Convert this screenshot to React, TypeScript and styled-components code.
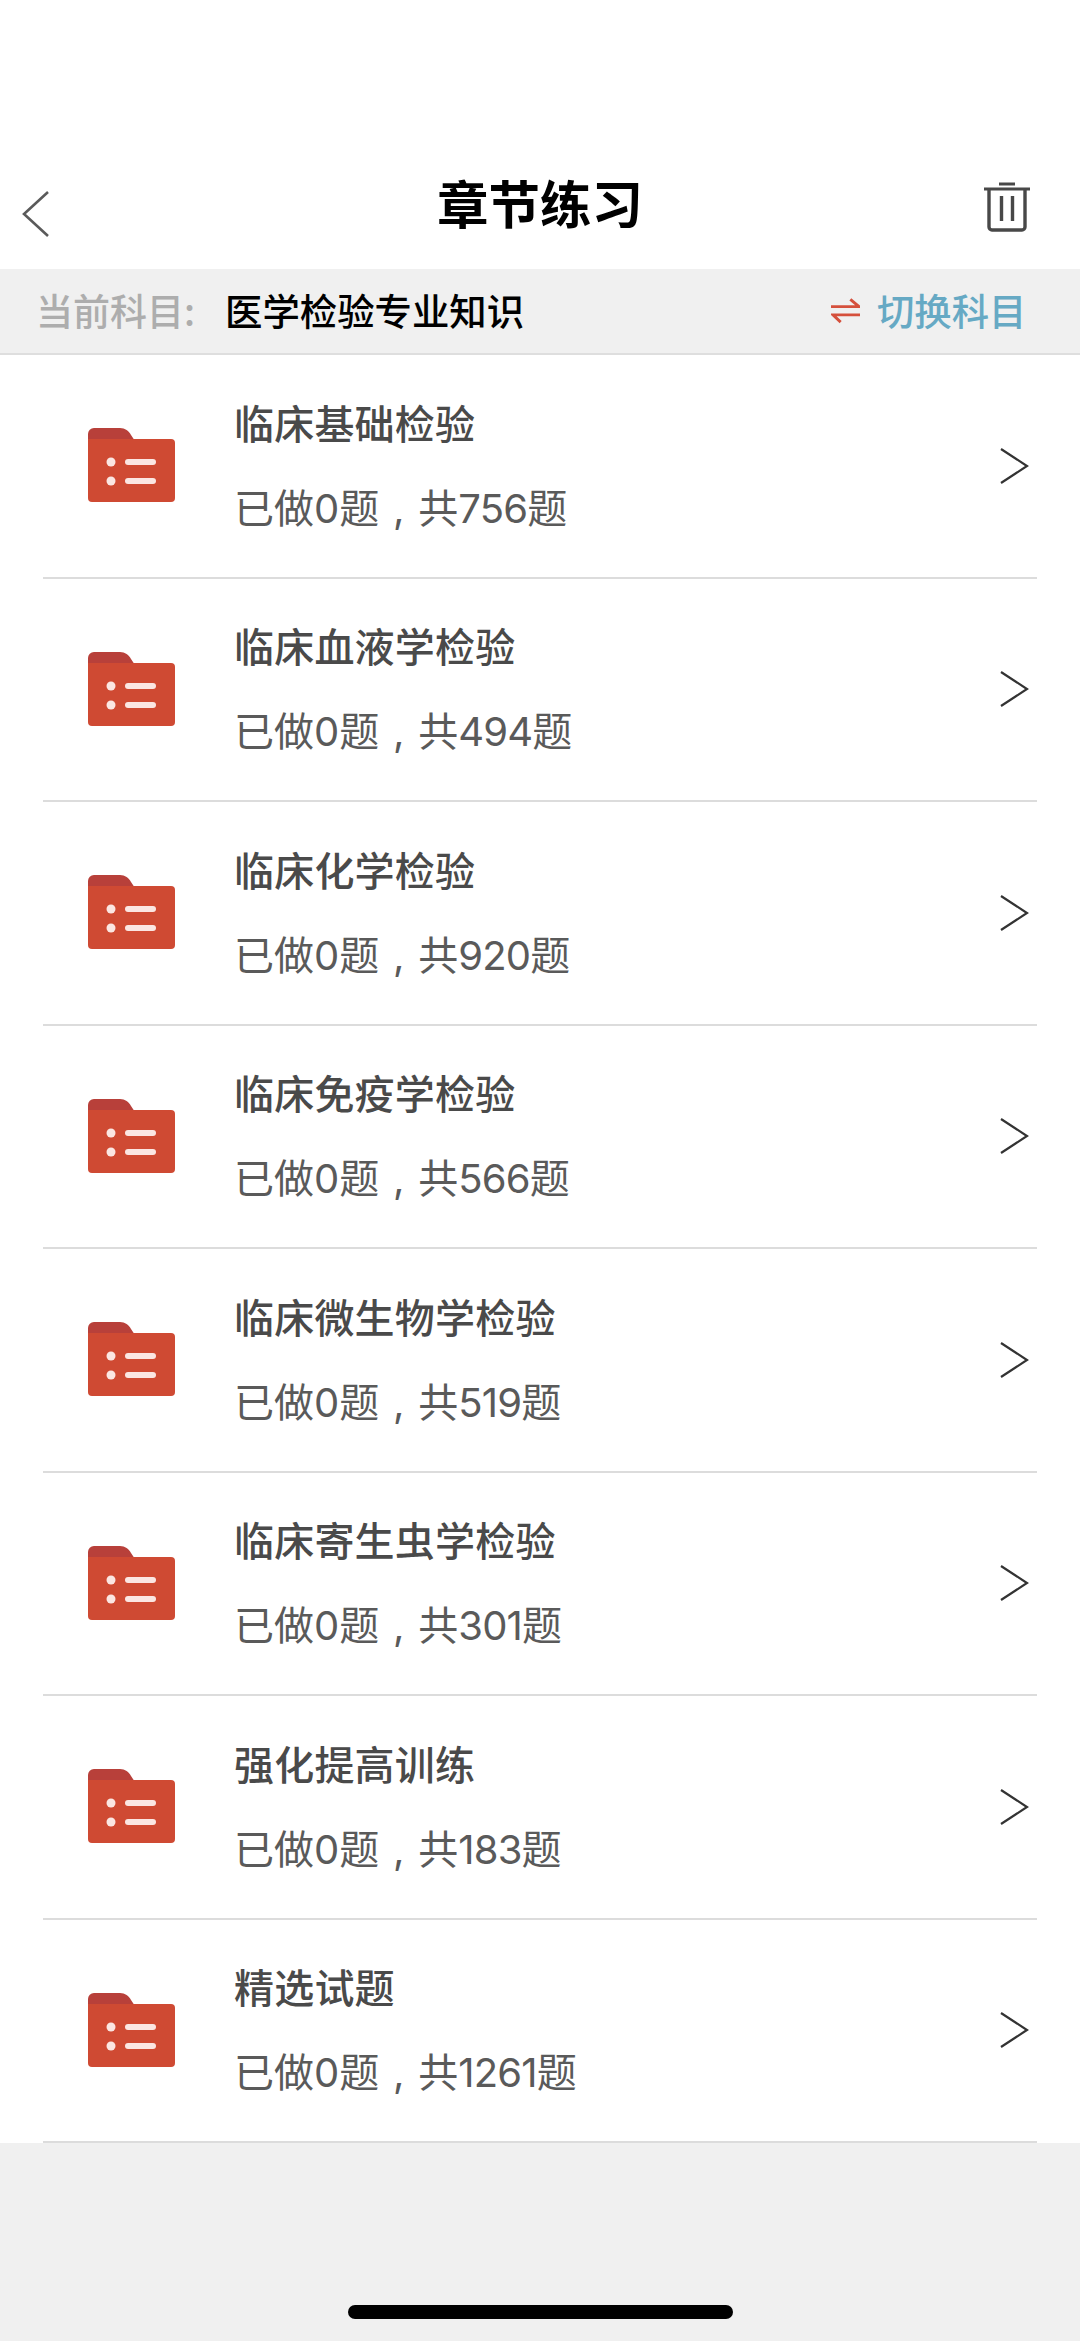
import React from "react";
import styled, { createGlobalStyle } from "styled-components";

const GlobalStyle = createGlobalStyle`
  html, body { margin: 0; padding: 0; background: #f0f0f0; }
  * { box-sizing: border-box; }
  body { font-family: "Noto Sans CJK SC", "Noto Sans", sans-serif; }
`;

const Page = styled.div`
  width: 1080px;
  height: 2341px;
  display: flex;
  flex-direction: column;
  background: #f0f0f0;
`;

const Header = styled.header`
  height: 269px;
  padding: 135px 49px 0;
  display: grid;
  grid-template-columns: 1fr auto 1fr;
  align-items: center;
  background: #fff;
`;

const BackIcon = styled.svg`
  width: 29px;
  height: 48px;
  margin: 24px 0 0 -28px;
  justify-self: start;
`;

const TrashIcon = styled.svg`
  width: 48px;
  height: 50px;
  margin-top: 9px;
  justify-self: end;
`;

const Title = styled.h1`
  margin: 0;
  font-size: 51.5px;
  line-height: 60px;
  font-weight: 700;
  color: #000;
`;

const SubjectBar = styled.div`
  height: 86px;
  padding: 0 53.5px 2px 36px;
  display: flex;
  align-items: center;
  background: #f0f0f0;
  border-bottom: 2px solid #dedede;
  font-size: 37.4px;
  line-height: 44px;
`;

const SubjectLabel = styled.span`
  width: 189px;
  font-size: 37px;
  color: #adadad;
  font-weight: 500;
`;

const SubjectValue = styled.span`
  flex: 1;
  color: #000;
  font-weight: 500;
`;

const SwitchIcon = styled.svg`
  width: 29px;
  height: 27px;
  margin-right: 17px;
`;

const SwitchLabel = styled.span`
  color: #66a9c4;
  font-weight: 500;
`;

const List = styled.ul`
  margin: 0;
  padding: 0;
  list-style: none;
  background: #fff;
`;

const Row = styled.li`
  height: 223.5px;
  margin: 0 43px;
  padding: 0 8px 0 45px;
  display: flex;
  align-items: center;
  border-bottom: 2px solid #dcdcdc;
`;

const FolderIcon = styled.svg`
  width: 87px;
  height: 75px;
  flex: none;
  margin-right: 59px;
`;

const RowText = styled.div`
  flex: 1;
  display: flex;
  flex-direction: column;
  gap: 27px;
  margin-top: -1px;
`;

const RowTitle = styled.div`
  font-size: 40px;
  line-height: 60px;
  font-weight: 500;
  letter-spacing: 0.2px;
  color: #4a4a4a;
`;

const RowMeta = styled.div`
  font-family: "Inter", "Noto Sans CJK SC", sans-serif;
  font-size: 40px;
  line-height: 60px;
  font-weight: 400;
  color: #5a5a5a;
`;

const Comma = styled.span`
  display: inline-block;
  width: 39px;
  text-align: center;
`;

const Count = styled.span`
  letter-spacing: -0.8px;
`;

const Chevron = styled.svg`
  width: 30px;
  height: 36px;
  flex: none;
`;

const Footer = styled.footer`
  flex: 1;
  display: flex;
  justify-content: center;
  align-items: flex-end;
  padding-bottom: 22px;
`;

const HomeIndicator = styled.div`
  width: 385px;
  height: 14px;
  border-radius: 7px;
  background: #000;
`;

const chapters = [
  { title: "临床基础检验", count: 756 },
  { title: "临床血液学检验", count: 494 },
  { title: "临床化学检验", count: 920 },
  { title: "临床免疫学检验", count: 566 },
  { title: "临床微生物学检验", count: 519 },
  { title: "临床寄生虫学检验", count: 301 },
  { title: "强化提高训练", count: 183 },
  { title: "精选试题", count: 1261 },
];

const Folder = () => (
  <FolderIcon viewBox="0 0 87 75" aria-hidden="true">
    <path d="M0 14V6a6 6 0 0 1 6-6h26c5 0 9 3 11 7l4 6v2H0z" fill="#b8403a" />
    <path d="M0 11h83a4 4 0 0 1 4 4v55a4 4 0 0 1-4 4H4a4 4 0 0 1-4-4z" fill="#cf4a33" />
    <circle cx="23" cy="34" r="4.5" fill="#fbe6e2" />
    <circle cx="23" cy="53" r="4.5" fill="#fbe6e2" />
    <rect x="37" y="31" width="31" height="6" rx="3" fill="#fbe6e2" />
    <rect x="37" y="50" width="31" height="6" rx="3" fill="#fbe6e2" />
  </FolderIcon>
);

export default function App() {
  return (
    <Page>
      <GlobalStyle />
      <Header>
        <BackIcon viewBox="0 0 29 48" fill="none" aria-hidden="true">
          <path d="M27 2 3 24l24 22" stroke="#5a5a5a" strokeWidth="2.6" />
        </BackIcon>
        <Title>章节练习</Title>
        <TrashIcon viewBox="0 0 48 50" fill="none" stroke="#484848" aria-hidden="true">
          <path d="M1 7h46" strokeWidth="3" />
          <path d="M16 2h16" strokeWidth="3" />
          <path d="M6 8v37a3 3 0 0 0 3 3h30a3 3 0 0 0 3-3V8" strokeWidth="3.4" />
          <path d="M18.5 14v25M29.5 14v25" strokeWidth="3.4" />
        </TrashIcon>
      </Header>
      <SubjectBar>
        <SubjectLabel>当前科目:</SubjectLabel>
        <SubjectValue>医学检验专业知识</SubjectValue>
        <SwitchIcon viewBox="0 0 30 27" fill="none" stroke="#d5503c" strokeWidth="3" aria-hidden="true">
          <path d="M0 9.5h29L20 2" />
          <path d="M30 18H2l8 7.5" />
        </SwitchIcon>
        <SwitchLabel>切换科目</SwitchLabel>
      </SubjectBar>
      <List>
        {chapters.map((c) => (
          <Row key={c.title}>
            <Folder />
            <RowText>
              <RowTitle>{c.title}</RowTitle>
              <RowMeta>
                已做0题<Comma>,</Comma>共<Count>{c.count}</Count>题
              </RowMeta>
            </RowText>
            <Chevron viewBox="0 0 30 36" fill="none" aria-hidden="true">
              <path d="M2 1l26 17L2 35" stroke="#333" strokeWidth="2.2" />
            </Chevron>
          </Row>
        ))}
      </List>
      <Footer>
        <HomeIndicator />
      </Footer>
    </Page>
  );
}
